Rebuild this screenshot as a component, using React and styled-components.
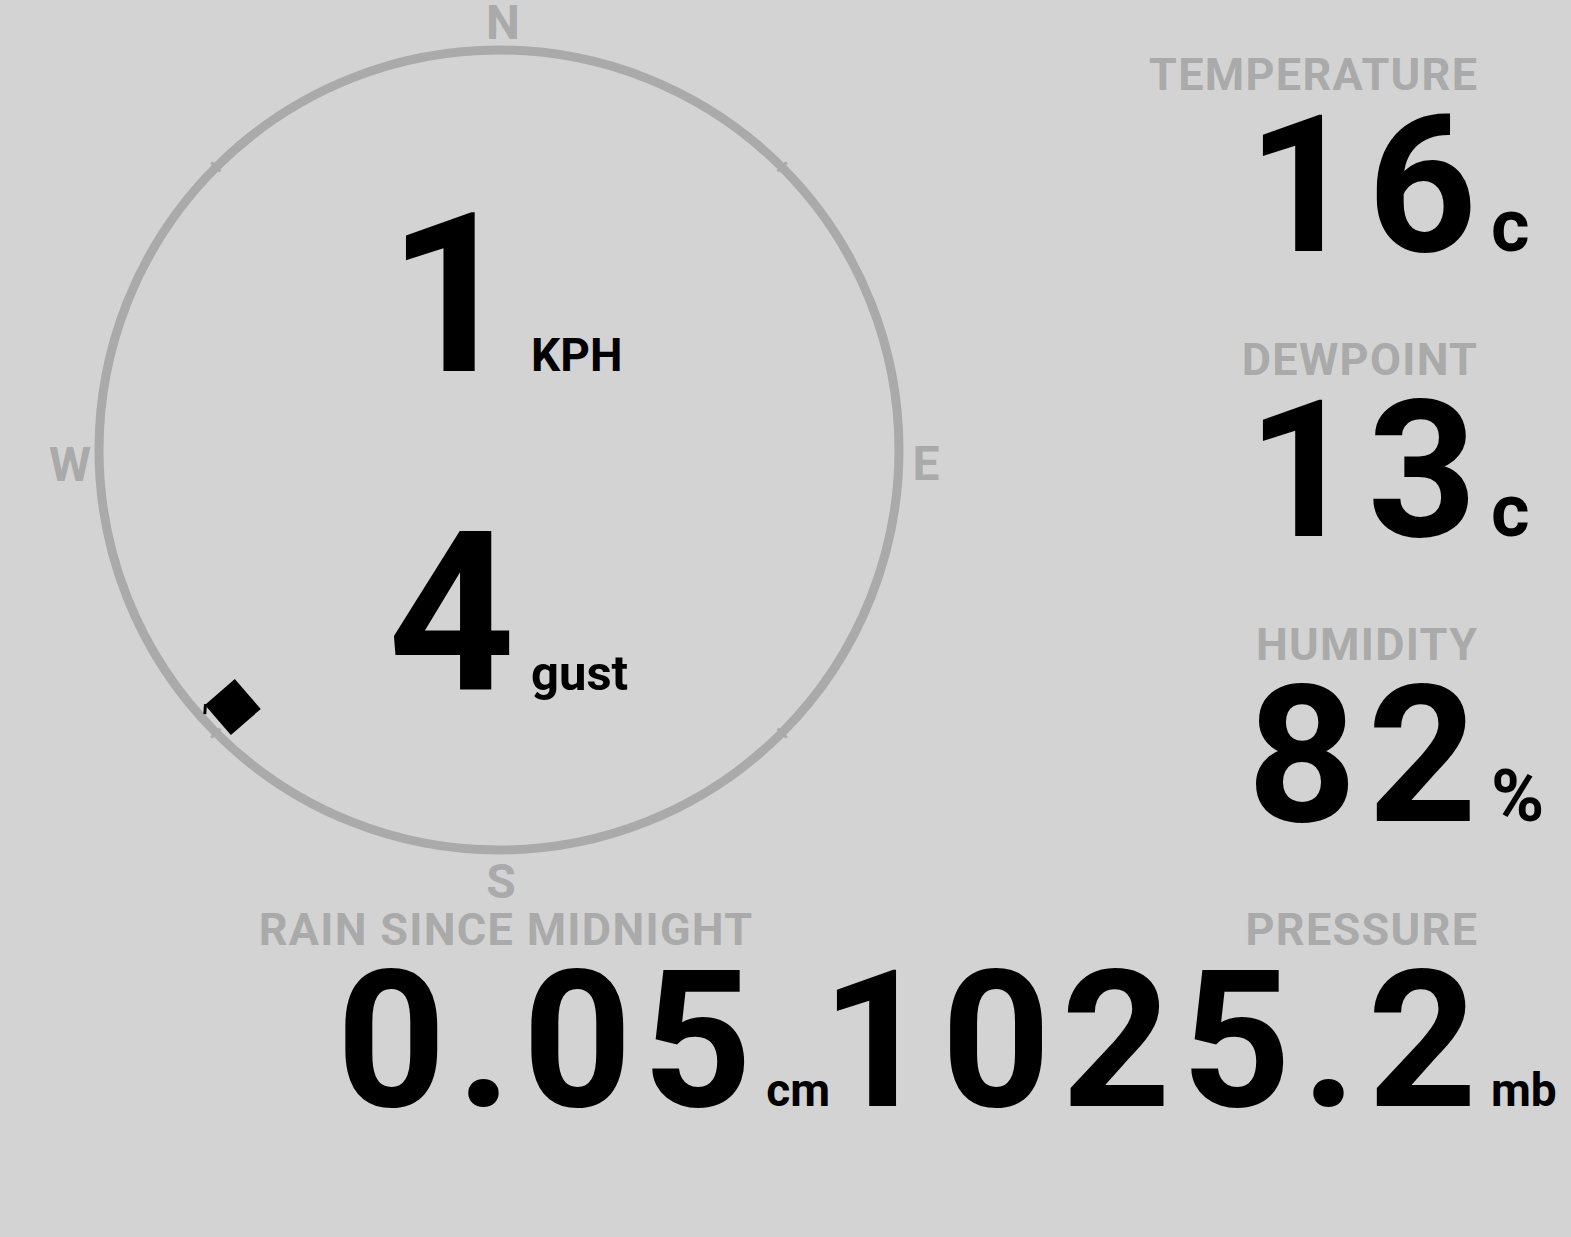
import React from "react";
import styled, { createGlobalStyle } from "styled-components";

const FONT = `Roboto, "Liberation Sans", Arial, sans-serif`;
const BG = "#d3d3d3";
const MUTED = "#aaaaaa";

const GlobalStyle = createGlobalStyle`
  html, body {
    margin: 0;
    padding: 0;
    background: ${BG};
  }
  body {
    font-family: ${FONT};
    color: #000;
    overflow: hidden;
  }
`;

const Page = styled.div`
  width: 1571px;
  height: 1237px;
  display: flex;
  flex-direction: column;
  background: ${BG};
  font-family: ${FONT};
`;

const Top = styled.div`
  display: flex;
  height: 905px;
`;

const CompassPanel = styled.div`
  flex: 0 0 960px;
  height: 905px;
  display: grid;
  & > * {
    grid-area: 1 / 1;
  }
`;

const Dial = styled.svg`
  display: block;
  width: 960px;
  height: 905px;
`;

const DialLetter = styled.text`
  font-family: ${FONT};
  font-weight: 700;
  font-size: 48px;
  fill: ${MUTED};
`;

const WindReadout = styled.div`
  display: grid;
  grid-template-columns: 515px auto;
  column-gap: 16px;
  row-gap: 97px;
  align-content: start;
  align-items: baseline;
  padding-top: 184px;
`;

const WindNumber = styled.div`
  font-size: 222px;
  line-height: 1;
  font-weight: 700;
  text-align: right;
`;

const WindUnit = styled.div`
  font-size: ${(p) => p.$size}px;
  line-height: 1;
  font-weight: 700;
`;

const Readings = styled.div`
  flex: 1;
  display: flex;
  flex-direction: column;
  align-items: flex-end;
  padding-top: 50px;
  gap: 63px;
`;

const Reading = styled.div`
  flex-shrink: 0;
  display: grid;
  grid-template-columns: auto ${(p) => p.$unitCol};
  column-gap: 14px;
  align-items: baseline;
`;

const Label = styled.div`
  grid-column: 1;
  font-size: 45px;
  line-height: 50px;
  font-weight: 700;
  letter-spacing: 1.3px;
  margin-right: -1.3px;
  color: ${MUTED};
  text-align: right;
  white-space: nowrap;
`;

const Value = styled.div`
  grid-column: 1;
  font-size: 191px;
  line-height: 172px;
  font-weight: 700;
  letter-spacing: 0.055em;
  margin-right: -0.055em;
  text-align: right;
  white-space: nowrap;
`;

const Unit = styled.div`
  grid-column: 2;
  font-size: ${(p) => p.$size}px;
  line-height: 1;
  font-weight: 700;
  white-space: nowrap;
`;

const Bottom = styled.div`
  display: flex;
  align-items: flex-start;
`;

const RainSlot = styled.div`
  flex: 0 0 830px;
  display: flex;
  justify-content: flex-end;
`;

const PressureSlot = styled.div`
  flex: 1;
  min-width: 0;
  display: flex;
  justify-content: flex-end;
`;

const CX = 499;
const CY = 450;
const R = 400;

function Compass({ bearing }) {
  const ticks = [45, 135, 225, 315].map((a) => {
    const rad = (a * Math.PI) / 180;
    const s = Math.sin(rad);
    const c = -Math.cos(rad);
    return {
      x1: CX + s * (R - 6),
      y1: CY + c * (R - 6),
      x2: CX + s * (R + 7),
      y2: CY + c * (R + 7),
    };
  });
  const rad = (bearing * Math.PI) / 180;
  const px = CX + Math.sin(rad) * 370;
  const py = CY - Math.cos(rad) * 370;
  const h = 28;
  return (
    <Dial viewBox="0 0 960 905">
      <circle cx={CX} cy={CY} r={R} fill="none" stroke={MUTED} strokeWidth="9" />
      {ticks.map((t, i) => (
        <line key={i} {...t} stroke={MUTED} strokeWidth="3" />
      ))}
      <g transform={`translate(${px} ${py}) rotate(${bearing - 222})`}>
        <polygon points={`0,${-h} ${h},0 0,${h} ${-h},0`} fill="#000" />
        <rect x={-h - 1} y={-1} width="3" height="10" fill="#000" />
      </g>
      <DialLetter x="503" y="39" textAnchor="middle">N</DialLetter>
      <DialLetter x="926" y="480" textAnchor="middle">E</DialLetter>
      <DialLetter x="501" y="898" textAnchor="middle">S</DialLetter>
      <DialLetter x="70" y="481" textAnchor="middle">W</DialLetter>
    </Dial>
  );
}

function Stat({ label, value, unit, unitSize, unitCol = "80px" }) {
  return (
    <Reading $unitCol={unitCol}>
      <Label>{label}</Label>
      <Value>{value}</Value>
      <Unit $size={unitSize}>{unit}</Unit>
    </Reading>
  );
}

export default function App() {
  return (
    <Page>
      <GlobalStyle />
      <Top>
        <CompassPanel>
          <Compass bearing={226} />
          <WindReadout>
            <WindNumber>1</WindNumber>
            <WindUnit $size={46}>KPH</WindUnit>
            <WindNumber>4</WindNumber>
            <WindUnit $size={49}>gust</WindUnit>
          </WindReadout>
        </CompassPanel>
        <Readings>
          <Stat label="TEMPERATURE" value="16" unit="c" unitSize={74} />
          <Stat label="DEWPOINT" value="13" unit="c" unitSize={74} />
          <Stat label="HUMIDITY" value="82" unit="%" unitSize={72} />
        </Readings>
      </Top>
      <Bottom>
        <RainSlot>
          <Stat label="RAIN SINCE MIDNIGHT" value="0.05" unit="cm" unitSize={46} unitCol="auto" />
        </RainSlot>
        <PressureSlot>
          <Stat label="PRESSURE" value="1025.2" unit="mb" unitSize={46} />
        </PressureSlot>
      </Bottom>
    </Page>
  );
}
